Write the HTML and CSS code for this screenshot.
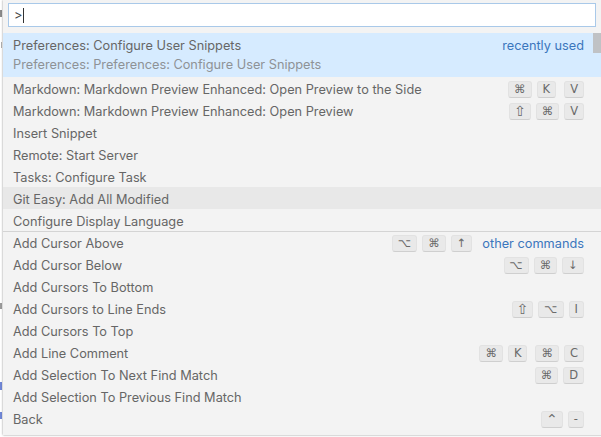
FILE: index.html
```html
<!DOCTYPE html>
<html>
<head>
<meta charset="utf-8">
<link rel="stylesheet" href="styles.css">
</head>
<body>
<div class="screen">
  <div class="gutter">
    <span class="frag f1"></span>
    <span class="frag f2"></span>
    <span class="frag f3"></span>
    <span class="frag f4"></span>
    <span class="frag f5"></span>
  </div>
  <div class="quick-open">
    <div class="input-wrap">
      <div class="input"><span class="prompt">&gt;</span><span class="caret"></span></div>
    </div>
    <div class="list">
      <div class="scrollbar"></div>
      <div class="row two-line selected">
        <div class="line">
          <span class="label">Preferences: Configure User Snippets</span>
          <span class="group">recently used</span>
        </div>
        <div class="line"><span class="detail">Preferences: Preferences: Configure User Snippets</span></div>
      </div>
      <div class="row">
        <span class="label">Markdown: Markdown Preview Enhanced: Open Preview to the Side</span>
        <span class="kb"><span class="chord"><span class="key">⌘</span><span class="key">K</span></span><span class="chord"><span class="key">V</span></span></span>
      </div>
      <div class="row">
        <span class="label">Markdown: Markdown Preview Enhanced: Open Preview</span>
        <span class="kb"><span class="chord"><span class="key big">⇧</span><span class="key">⌘</span><span class="key">V</span></span></span>
      </div>
      <div class="row"><span class="label">Insert Snippet</span></div>
      <div class="row"><span class="label">Remote: Start Server</span></div>
      <div class="row"><span class="label">Tasks: Configure Task</span></div>
      <div class="row hover"><span class="label">Git Easy: Add All Modified</span></div>
      <div class="row"><span class="label">Configure Display Language</span></div>
      <div class="row separator">
        <span class="label">Add Cursor Above</span>
        <span class="kb"><span class="chord"><span class="key">⌥</span><span class="key">⌘</span><span class="key">↑</span></span></span>
        <span class="group with-kb">other commands</span>
      </div>
      <div class="row">
        <span class="label">Add Cursor Below</span>
        <span class="kb"><span class="chord"><span class="key">⌥</span><span class="key">⌘</span><span class="key">↓</span></span></span>
      </div>
      <div class="row"><span class="label">Add Cursors To Bottom</span></div>
      <div class="row">
        <span class="label">Add Cursors to Line Ends</span>
        <span class="kb"><span class="chord"><span class="key big">⇧</span><span class="key">⌥</span><span class="key">I</span></span></span>
      </div>
      <div class="row"><span class="label">Add Cursors To Top</span></div>
      <div class="row">
        <span class="label">Add Line Comment</span>
        <span class="kb"><span class="chord"><span class="key">⌘</span><span class="key">K</span></span><span class="chord"><span class="key">⌘</span><span class="key">C</span></span></span>
      </div>
      <div class="row">
        <span class="label">Add Selection To Next Find Match</span>
        <span class="kb"><span class="chord"><span class="key">⌘</span><span class="key">D</span></span></span>
      </div>
      <div class="row"><span class="label">Add Selection To Previous Find Match</span></div>
      <div class="row">
        <span class="label">Back</span>
        <span class="kb"><span class="chord"><span class="key big">⌃</span><span class="key">-</span></span></span>
      </div>
    </div>
  </div>
</div>
</body>
</html>
```

FILE: styles.css
```css
html, body {
  margin: 0;
  padding: 0;
  background: #ffffff;
  overflow: hidden;
}

.screen {
  display: flex;
  width: 601px;
  height: 437px;
  overflow: hidden;
  font-family: Inter, "Liberation Sans", sans-serif;
  font-size: 12.75px;
  color: #666666;
}

.gutter {
  width: 3px;
  flex: none;
  display: flex;
  flex-direction: column;
  align-items: flex-start;
  background: #ffffff;
}

.frag {
  display: block;
  width: 2px;
}
.f1 { margin-top: 10px; height: 7px; background: #8a8a8a; }
.f2 { margin-top: 25px; height: 6px; width: 1px; margin-left: 1px; background: #b0b0b0; }
.f3 { margin-top: 255px; height: 6px; background: #9a9a9a; }
.f4 { margin-top: 73px; height: 8px; background: #6f86d6; }
.f5 { margin-top: 22px; height: 7px; background: #6f86d6; }

.quick-open {
  position: relative;
  flex: none;
  width: 600px;
  height: 435px;
  background: #f3f3f3;
  box-shadow: 0 0 2px rgba(0, 0, 0, 0.45);
  display: flex;
  flex-direction: column;
}

.input-wrap {
  padding: 3px 7px 0 5px;
}

.input {
  height: 22px;
  background: #ffffff;
  border: 1px solid #a9c9e9;
  display: flex;
  align-items: center;
  padding-left: 5px;
  color: #444;
}

.prompt {
  line-height: 22px;
}

.caret {
  display: inline-block;
  width: 1px;
  height: 15px;
  margin-left: 1px;
  background: #333;
}

.list {
  position: relative;
  margin-top: 6px;
}

.scrollbar {
  position: absolute;
  top: 0;
  right: 0;
  width: 10px;
  height: 20px;
  background: #c0c2c5;
}

.row {
  box-sizing: border-box;
  height: 22px;
  display: flex;
  align-items: center;
  padding: 2px 19px 0 10px;
  white-space: nowrap;
}

.row .label {
  flex: 1;
}

.row.two-line {
  height: 44px;
  flex-direction: column;
  align-items: stretch;
  justify-content: center;
  padding-top: 0;
}

.row.two-line .line {
  display: flex;
  align-items: center;
  height: 19px;
}

.selected {
  background: #d6ebff;
}

.hover {
  background: #e8e8e8;
}

.separator {
  border-top: 1px solid #d4d4d4;
  padding-top: 1px;
}

.detail {
  color: #8e9296;
}

.group {
  color: #3b76bd;
}

.group.with-kb {
  margin-left: 10px;
}

.kb {
  display: flex;
  gap: 8px;
}

.chord {
  display: flex;
  gap: 5px;
}

.key {
  display: inline-flex;
  align-items: center;
  justify-content: center;
  box-sizing: border-box;
  height: 17px;
  min-width: 14px;
  padding: 0 5px;
  font-family: "DejaVu Sans", "Liberation Sans", sans-serif;
  font-size: 11.5px;
  color: #6a6a6a;
  background: #e9e9e9;
  border: 1px solid #e2e2e2;
  border-bottom-color: #cfcfcf;
  border-radius: 3px;
}

.key.big {
  font-size: 14px;
  padding: 0 4px;
}
```
